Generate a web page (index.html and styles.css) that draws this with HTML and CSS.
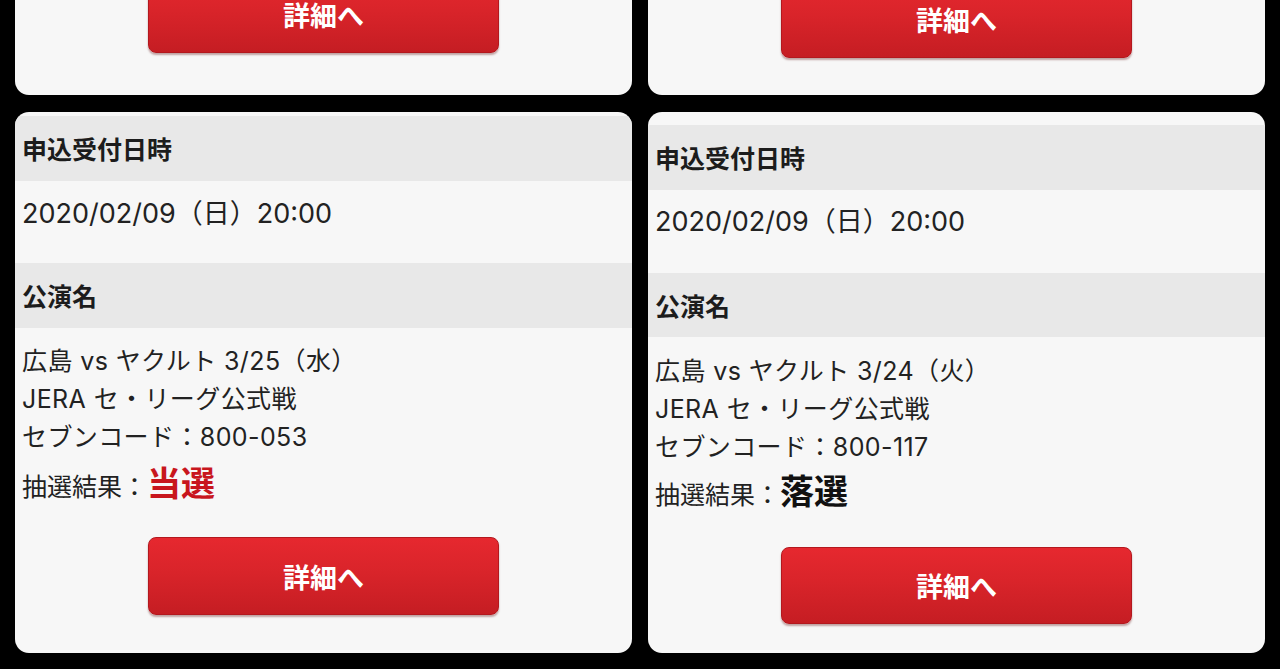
FILE: index.html
```html
<!DOCTYPE html>
<html lang="ja">
<head>
<meta charset="utf-8">
<title>抽選結果</title>
<link rel="stylesheet" href="styles.css">
</head>
<body>
<div class="grid">
  <div class="col col--left">
    <div class="card stub stub--left">
      <div class="actions"><button class="btn">詳細へ</button></div>
    </div>
    <div class="card detail detail--left">
      <div class="band">申込受付日時</div>
      <div class="value">2020/02/09（日）20:00</div>
      <div class="band">公演名</div>
      <div class="lines">
        <div class="line">広島 vs ヤクルト 3/25（水）</div>
        <div class="line">JERA セ・リーグ公式戦</div>
        <div class="line">セブンコード：800-053</div>
        <div class="line result">抽選結果：<span class="res res--win">当選</span></div>
      </div>
      <div class="actions"><button class="btn">詳細へ</button></div>
    </div>
  </div>
  <div class="col col--right">
    <div class="card stub stub--right">
      <div class="actions"><button class="btn">詳細へ</button></div>
    </div>
    <div class="card detail detail--right">
      <div class="band">申込受付日時</div>
      <div class="value">2020/02/09（日）20:00</div>
      <div class="band">公演名</div>
      <div class="lines">
        <div class="line">広島 vs ヤクルト 3/24（火）</div>
        <div class="line">JERA セ・リーグ公式戦</div>
        <div class="line">セブンコード：800-117</div>
        <div class="line result">抽選結果：<span class="res res--lose">落選</span></div>
      </div>
      <div class="actions"><button class="btn">詳細へ</button></div>
    </div>
  </div>
</div>
</body>
</html>
```

FILE: styles.css
```css
html, body {
  margin: 0;
  padding: 0;
  background: #000;
  height: 669px;
  overflow: hidden;
}
body {
  font-family: "Inter", "Noto Sans CJK JP", sans-serif;
  color: #222;
}
.grid {
  display: flex;
  gap: 16px;
  padding: 0 15px;
}
.col {
  width: 617px;
  display: flex;
  flex-direction: column;
  gap: 17px;
}
.col--left { margin-top: -35px; }
.col--right { margin-top: -30px; }

.card {
  background: #f7f7f7;
  border-radius: 14px;
  overflow: hidden;
}
.stub { padding-top: 10px; }
.stub--left { padding-bottom: 42px; }
.stub--right { padding-bottom: 37px; }

.actions {
  display: flex;
  justify-content: center;
}
.btn {
  width: 351px;
  height: 78px;
  border: 1px solid #b3181e;
  border-radius: 8px;
  background: linear-gradient(#e6282f 0%, #d9242a 45%, #c51d23 100%);
  box-shadow: 0 2px 2px rgba(90, 0, 0, 0.35);
  color: #fff;
  font-family: "Noto Sans CJK JP", sans-serif;
  font-size: 27px;
  font-weight: 700;
  padding: 0;
  cursor: pointer;
}

.band {
  background: #e8e8e8;
  font-family: "Noto Sans CJK JP", sans-serif;
  font-size: 25px;
  font-weight: 700;
  line-height: 65px;
  height: 65px;
  padding: 0 7px;
  color: #1c1c1c;
}
.value {
  font-size: 27px;
  line-height: 38px;
  height: 38px;
  padding: 14px 7px 30px;
}
.lines {
  padding: 14px 7px 0;
}
.line {
  font-size: 25px;
  line-height: 38px;
  height: 38px;
  letter-spacing: 0.4px;
  white-space: nowrap;
}
.result { line-height: 52px; height: 52px; letter-spacing: 0; }
.res {
  font-family: "Noto Sans CJK JP", sans-serif;
  font-weight: 700;
  font-size: 34px;
}
.res--win { color: #c8161d; }
.res--lose { color: #111; }

.detail--left { padding: 4px 0 38px; }
.detail--left .lines { margin-bottom: 29px; }

.detail--right { padding: 13px 0 29px; }
.detail--right .value { padding: 13px 7px 32px; }
.detail--right .band + .value + .band { height: 64px; line-height: 64px; }
.detail--right .lines { padding-top: 15px; margin-bottom: 33px; }
.detail--right .result { line-height: 48px; height: 48px; }
.detail--right .btn { height: 77px; }
```
